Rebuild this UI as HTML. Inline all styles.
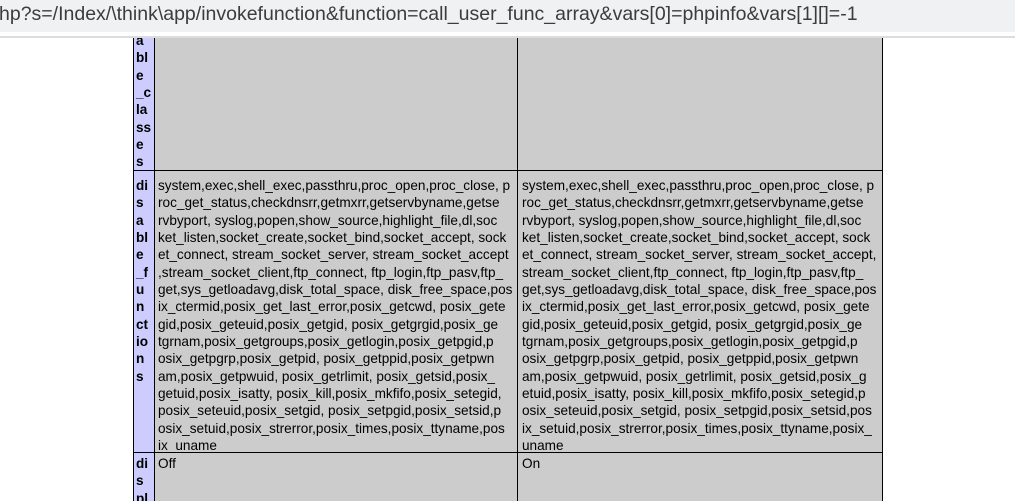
<!DOCTYPE html>
<html><head><meta charset="utf-8"><style>
body{margin:0;width:1015px;height:501px;overflow:hidden;background:#fff;position:relative;font-family:"Liberation Sans","Noto Sans CJK SC",sans-serif}
#bar{position:absolute;left:0;top:0;width:1015px;height:32px;background:#f0f1f3}
#bar span{position:absolute;left:-1px;top:3px;font-size:19.5px;color:#3c3c3c;white-space:nowrap}
#line{position:absolute;left:0;top:36px;width:1015px;height:2px;background:#dadce0}
.c{position:absolute;box-sizing:border-box;border:1px solid #000;background:#ccc;overflow:hidden}
.l{background:#ccf;font-weight:bold}
.t{position:absolute;font-size:13.6px;line-height:17.35px;white-space:pre;color:#000}
</style></head><body>
<div id="bar"><span>hp?s=/Index/\think\app/invokefunction&amp;function=call_user_func_array&amp;vars[0]=phpinfo&amp;vars[1][]=-1</span></div>
<div id="line"></div>
<div style="position:absolute;left:0;top:38px;width:1015px;height:463px;overflow:hidden">
<div class="c l" style="left:133px;top:-10px;width:22px;height:143px"><div class="t" style="left:2px;top:3px">a
bl
e
_c
la
ss
e
s</div></div>
<div class="c" style="left:154px;top:-10px;width:364px;height:143px"></div>
<div class="c" style="left:517px;top:-10px;width:366px;height:143px"></div>

<div class="c l" style="left:133px;top:132px;width:22px;height:283px"><div class="t" style="left:2px;top:6px">di
s
a
bl
e
_f
u
n
ct
io
n
s</div></div>
<div class="c" style="left:154px;top:132px;width:364px;height:283px"><div class="t" style="left:3px;top:6px">system,exec,shell_exec,passthru,proc_open,proc_close, p
roc_get_status,checkdnsrr,getmxrr,getservbyname,getse
rvbyport, syslog,popen,show_source,highlight_file,dl,soc
ket_listen,socket_create,socket_bind,socket_accept, sock
et_connect, stream_socket_server, stream_socket_accept
,stream_socket_client,ftp_connect, ftp_login,ftp_pasv,ftp_
get,sys_getloadavg,disk_total_space, disk_free_space,pos
ix_ctermid,posix_get_last_error,posix_getcwd, posix_gete
gid,posix_geteuid,posix_getgid, posix_getgrgid,posix_ge
tgrnam,posix_getgroups,posix_getlogin,posix_getpgid,p
osix_getpgrp,posix_getpid, posix_getppid,posix_getpwn
am,posix_getpwuid, posix_getrlimit, posix_getsid,posix_
getuid,posix_isatty, posix_kill,posix_mkfifo,posix_setegid,
posix_seteuid,posix_setgid, posix_setpgid,posix_setsid,p
osix_setuid,posix_strerror,posix_times,posix_ttyname,pos
ix_uname</div></div>
<div class="c" style="left:517px;top:132px;width:366px;height:283px"><div class="t" style="left:4px;top:6px">system,exec,shell_exec,passthru,proc_open,proc_close, p
roc_get_status,checkdnsrr,getmxrr,getservbyname,getse
rvbyport, syslog,popen,show_source,highlight_file,dl,soc
ket_listen,socket_create,socket_bind,socket_accept, sock
et_connect, stream_socket_server, stream_socket_accept,
stream_socket_client,ftp_connect, ftp_login,ftp_pasv,ftp_
get,sys_getloadavg,disk_total_space, disk_free_space,pos
ix_ctermid,posix_get_last_error,posix_getcwd, posix_gete
gid,posix_geteuid,posix_getgid, posix_getgrgid,posix_ge
tgrnam,posix_getgroups,posix_getlogin,posix_getpgid,p
osix_getpgrp,posix_getpid, posix_getppid,posix_getpwn
am,posix_getpwuid, posix_getrlimit, posix_getsid,posix_g
etuid,posix_isatty, posix_kill,posix_mkfifo,posix_setegid,p
osix_seteuid,posix_setgid, posix_setpgid,posix_setsid,pos
ix_setuid,posix_strerror,posix_times,posix_ttyname,posix_
uname</div></div>

<div class="c l" style="left:133px;top:414px;width:22px;height:80px"><div class="t" style="left:2px;top:2px">di
s
pl</div></div>
<div class="c" style="left:154px;top:414px;width:364px;height:80px"><div class="t" style="left:3px;top:2px">Off</div></div>
<div class="c" style="left:517px;top:414px;width:366px;height:80px"><div class="t" style="left:4px;top:2px">On</div></div>
</div>
</body></html>
